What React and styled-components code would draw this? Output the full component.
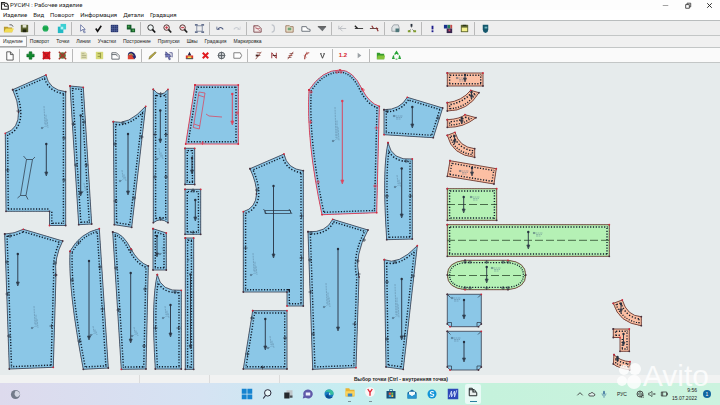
import React, { useState } from 'react';
import styled, { createGlobalStyle } from 'styled-components';

const BLUE = '#8bc7e7';
const ORANGE = '#fcbfa3';
const GREEN = '#b5f1b5';
const INK = '#26303f';
const RED = '#e23a52';

const menus = ['Изделие', 'Вид', 'Поворот', 'Информация', 'Детали', 'Градация'];

const tabs = ['Изделие', 'Поворот', 'Точки', 'Линии', 'Участки', 'Построение', 'Припуски', 'Швы', 'Градация', 'Маркировка'];

const icons = {
  open: <><path d="M1 4h4l1 1h4v5H1z" fill="#b99a2e" /><path d="M3 6h9l-2 4H1z" fill="#f1dc55" /><path d="M7 2q3-1 4 2" stroke="#555" fill="none" /></>,
  save: <><path d="M2 2h8v8H2z" fill="#5c6330" /><path d="M4 2h4v3H4z" fill="#e4e6d2" /><path d="M4 7h4v3H4z" fill="#22260f" /></>,
  circle: <><circle cx="6" cy="6" r="3.3" fill="#17a74a" /><path d="M4 3h4M4 9h4" stroke="#6cc9a0" /></>,
  copies: <><path d="M5 1h6v6H5z" fill="#3bd0d3" /><path d="M2 4h6v7H2z" fill="#22b9c4" /><path d="M5 4h3v3H5z" fill="#aef4f2" /></>,
  cursor: <path d="M4 2v7l2-2 2 4 1-1-2-3h2z" fill="#fff" stroke="#4c5a92" strokeWidth=".8" />,
  check: <path d="M3 6l2 3 4-6" fill="none" stroke="#111" strokeWidth="1.7" />,
  grid: <><path d="M2 2h8v8H2z" fill="#25346e" /><path d="M4 2v8M6 2v8M8 2v8M2 4h8M2 6h8M2 8h8" stroke="#6f80b8" strokeWidth=".4" /></>,
  blocks: <><path d="M2 2h5v5H2zM6 6h5v4H6z" fill="#145c2b" /><path d="M3 3h2v2H3zM8 7h2v2H8z" fill="#49a34c" /></>,
  zoom: <><circle cx="5" cy="5" r="3" fill="#eef4f4" stroke="#222" /><path d="M7 7l3 3.4" stroke="#111" strokeWidth="1.8" /></>,
  zoomIn: <><circle cx="5" cy="5" r="3" fill="#f4dcdc" stroke="#462a2a" /><path d="M3.5 5h3M5 3.5v3" stroke="#c22c3c" strokeWidth=".9" /><path d="M7 7l3 3.4" stroke="#222" strokeWidth="1.8" /></>,
  zoomOut: <><circle cx="5" cy="5" r="3" fill="#f4dcdc" stroke="#462a2a" /><path d="M3.5 5h3" stroke="#c22c3c" /><path d="M7 7l3 3.4" stroke="#222" strokeWidth="1.8" /></>,
  frame: <><path d="M3 3h6v6H3z" fill="none" stroke="#66728f" strokeWidth=".8" /><path d="M1 1h3v2H1zM8 1h3v2H8zM1 9h3v2H1zM8 9h3v2H8z" fill="#66728f" /></>,
  undo: <><path d="M3 7q3-4 6 0" fill="none" stroke="#4b587e" strokeWidth="1.1" /><path d="M2 4v3h3" fill="none" stroke="#4b587e" strokeWidth=".8" /></>,
  redo: <><path d="M3 7q3-4 6 0" fill="none" stroke="#c9ccd2" strokeWidth="1.1" /><path d="M10 4v3H7" fill="none" stroke="#c9ccd2" strokeWidth=".8" /></>,
  partRed: <><path d="M2 3h5l3 3v4H2z" fill="#f3e7e5" stroke="#7d4b50" /><path d="M2 3l7 6M4 6h5" stroke="#b15560" strokeWidth=".7" /></>,
  bracket: <path d="M4 2q3 0 3 4t-3 4" fill="none" stroke="#c0c4ca" strokeWidth="1.4" />,
  partGreen: <><path d="M2 3h4l1 1h3v6H2z" fill="#efe2cd" stroke="#9b7a60" /><path d="M4 5h4v3H4z" fill="#72a678" /></>,
  part: <path d="M2 4h5q0 3 4 3v2H2z" fill="#fff" stroke="#555c66" strokeWidth=".9" />,
  wedge: <><path d="M2 4h9L7 9z" fill="#6c7073" /><path d="M2 4h9" stroke="#444" /></>,
  lineGrey: <path d="M2 3v4M2 6h8M6 3L3 6l3 3" fill="none" stroke="#b4b7bc" strokeWidth=".9" />,
  lineOne: <><path d="M2 6h9" stroke="#333" /><path d="M2 3l3 3" stroke="#222" strokeWidth="1.4" /></>,
  lineTwo: <><path d="M1 6h9" stroke="#5b3b38" /><path d="M3 3l2 3M8 5l2 4" stroke="#8f2e2e" strokeWidth="1.3" /></>,
  printer: <><path d="M2 5l2-3h5l1 3v4H2z" fill="#dfe4e6" stroke="#899097" strokeWidth=".8" /><path d="M6 6h4v4H6z" fill="#4f787b" /></>,
  nodes: <><path d="M6 2v3M3 9l2-2M9 9L7 7" stroke="#777" /><path d="M5 1h2v3H5z" fill="#27303c" /><path d="M2 8h3v2H2zM8 8h3v2H8z" fill="#7f9c2c" /></>,
  mark: <><path d="M5 3h2v4H5z" fill="#1c1b8a" /><path d="M5 8h2v2H5z" fill="#1c1b8a" /></>,
  palette: <><path d="M1 2h4v4H1z" fill="#18308c" /><path d="M5 2h3v4H5z" fill="#237d55" /><path d="M8 2h2v4H8z" fill="#c54848" /><path d="M4 6h6v5H4z" fill="#39274e" /><path d="M6 7h2v2H6z" fill="#c54869" /></>,
  calc: <><path d="M2 2h8v8H2z" fill="#5d6531" /><path d="M3 5h6v4H3z" fill="#f4f18e" /><path d="M4 2h4v1H4z" fill="#1d2515" /></>,
  shield: <><path d="M3 2h6v5q0 3-3 4-3-1-3-4z" fill="#14576c" /><path d="M5 4h3v2H5z" fill="#72b5c0" /></>,
  page: <path d="M3 2h4l3 3v6H3zM7 2v3h3" fill="#fff" stroke="#444" strokeWidth=".9" />,
  plus: <path d="M4.5 2h3v2.500H10v3H7.500V10h-3V7.500H2v-3h2.500z" fill="#0f8a2d" stroke="#0a5c1d" strokeWidth=".6" />,
  delRed: <><path d="M2 2h8v8H2z" fill="#e21b22" /><path d="M2 2l8 8M10 2l-8 8" stroke="#b51820" strokeWidth="1.6" /></>,
  delBrown: <><circle cx="6" cy="6" r="3.6" fill="#63753b" /><path d="M2 2l8 8M10 2l-8 8" stroke="#a6352a" strokeWidth="1.5" /></>,
  noteOld: <><path d="M3 2h5l2 2v6H3z" fill="#ddddb0" /><path d="M4 4h3M4 6h5M4 8h5" stroke="#a4a578" strokeWidth=".8" /></>,
  noteNew: <><path d="M2 2h8v8H2z" fill="#d6d977" /><path d="M7 3v6M4 4h3M4 7h3" stroke="#8e9442" /></>,
  detail: <path d="M2 3h5l3 3v4H2zM2 5h5l1 2" fill="#fff" stroke="#50565c" strokeWidth=".9" />,
  protractor: <><path d="M2 6q0-4 4-4 4 1 5 6l-2 2z" fill="#24266f" /><path d="M2 6l4-1 3 5H2z" fill="#dc4434" /><path d="M3 5q3-2 5 1" fill="none" stroke="#f6d94e" /></>,
  pencil: <path d="M2 10l1-3 6-5 1 1-6 6z" fill="#b7a840" stroke="#6f682f" strokeWidth=".6" />,
  pick: <><path d="M3 2v6l2-1 2 4 1-1-1-3h2z" fill="#7e83c9" stroke="#3d4075" strokeWidth=".7" /><path d="M7 3h3v5M2 5h6" stroke="#55598f" fill="none" /></>,
  dart: <><path d="M6 2l2 4H4z" fill="#231f43" /><path d="M2 6h8v3H2z" fill="#d9332b" /><path d="M4 7h4v2H4z" fill="#f4e14a" /><path d="M2 9h8v1H2z" fill="#333" /></>,
  cross: <path d="M3 3l6 6M9 3l-6 6" stroke="#e01a1f" strokeWidth="2.200" />,
  target: <><circle cx="6" cy="6" r="3.6" fill="#c9cccf" stroke="#5a6066" /><path d="M6 2v8M2 6h8" stroke="#5a6066" /></>,
  label: <path d="M2 3h7l1.500 3L9 9H2z" fill="#fff" stroke="#777" />,
  segA: <><path d="M3 10l6-8M4 3h4M4 6h4" stroke="#96534a" /><path d="M3 5h3v2H3z" fill="#4a2220" /></>,
  segB: <><path d="M3 9V3l5 6V3" fill="none" stroke="#9a3135" /><path d="M4 6h4" stroke="#4a2220" /></>,
  segC: <><path d="M3 10l6-8M4 6h4" stroke="#a5564d" /><path d="M5 4h4M3 8h4" stroke="#6a2c2c" strokeWidth=".8" /></>,
  segD: <><path d="M4 10q0-7 5-7" fill="none" stroke="#a33b38" strokeWidth="1.300" /><path d="M3 6l3 2M6 2l1 3" stroke="#b86058" strokeWidth=".8" /></>,
  vee: <path d="M4 4l2 5 2-5M3.500 4h1.500M7 4h1.500" fill="none" stroke="#2b2b2b" strokeWidth=".9" />,
  play: <path d="M4 3l4 3-4 3z" fill="#9aa0a4" />,
  folderGreen: <><path d="M2 3h3l1 1h4v6H2z" fill="#359b2d" /><path d="M3 6h8l-1 4H2z" fill="#84c43a" /></>,
  recycle: <><path d="M4 5l2-3 2 3M9 6l1 3H8M3 6L2 9h2" fill="none" stroke="#27a336" strokeWidth="1.500" /><path d="M5 10h2" stroke="#27a336" /></>,
};

const mainTools = [
  [['open', 'Открыть'], ['save', 'Сохранить']],
  [['circle', 'Размеры'], ['copies', 'Копии']],
  [['cursor', 'Выбор'], ['check', 'Проверка'], ['grid', 'Сетка'], ['blocks', 'Раскладка']],
  [['zoom', 'Лупа'], ['zoomIn', 'Увеличить'], ['zoomOut', 'Уменьшить'], ['frame', 'Показать все']],
  [['undo', 'Отменить'], ['redo', 'Повторить']],
  [['partRed', 'Деталь'], ['bracket', 'Контур'], ['partGreen', 'Папка деталей'], ['part', 'Лекало'], ['wedge', 'Фильтр']],
  [['lineGrey', 'Линия'], ['lineOne', 'Начало линии'], ['lineTwo', 'Конец линии']],
  [['printer', 'Печать'], ['nodes', 'Структура']],
  [['mark', 'Справка'], ['palette', 'Цвета'], ['calc', 'Калькулятор']],
  [['shield', 'Защита']],
];

const productTools = [
  [['page', 'Новое изделие']],
  [['plus', 'Добавить деталь'], ['delRed', 'Удалить деталь'], ['delBrown', 'Удалить все']],
  [['noteOld', 'Описание'], ['noteNew', 'Спецификация'], ['detail', 'Свойства'], ['protractor', 'Поворот детали']],
  [['pencil', 'Карандаш'], ['pick', 'Выбор участка']],
  [['dart', 'Вытачка'], ['cross', 'Удалить'], ['target', 'Центр'], ['label', 'Надпись']],
  [['segA', 'Отрезок'], ['segB', 'Ломаная'], ['segC', 'Кривая'], ['segD', 'Дуга'], ['vee', 'Надсечка']],
  [['scale', 'Масштаб'], ['play', 'Пуск']],
  [['folderGreen', 'База'], ['recycle', 'Обновить']],
];

// d: outline, a: grain line [x, y1, y2], n: notches, t: handwritten label [x, y, height], m: extra marks
const pieces = [
  { d: 'M12.7 89.7 L46 75 Q49 90 65.7 91.7 L65.7 225.5 L49.5 225.5 L49.5 211.3 L6 211.3 L5.3 133.3 Q19 129 18.5 112 Q18 101 12.7 89.7', a: [46.3, 144, 176], n: [[18.500, 111], [64, 138], [64, 180], [7.500, 170]], t: [42, 128, 22], m: 'M23.500 156L26.500 159.500H32.500L35 157M26.500 159.500L20.500 195.500H26L32.500 159.500M20.500 195.500L17.500 198M26 195.500L28 199.500' },
  { d: 'M70 86 L83.300 87.300 L91.700 224 L78.700 224.700 L70 86', a: [80.7, 115.500, 196], n: [[73.500, 124], [84, 122], [76, 165], [86.500, 165]], t: [82, 192, 9] },
  { d: 'M113.300 121.700 Q128 126 145.700 106.300 L131.700 227.300 L114.300 224.700 L113.300 121.700', a: [128, 134, 195], n: [[123, 123], [115, 144], [115.500, 201], [141.500, 137], [134, 198]], t: [120, 181, 11] },
  { d: 'M153.300 89.300 Q160.700 99 168 89.300 L168 222.700 Q160.700 217 153.300 222.700 L153.300 89.300', a: [160.300, 110.500, 143], n: [[155, 134.500], [166, 134.500], [155, 177], [166, 177], [160.700, 94], [160.700, 219]], t: [157, 159, 11] },
  { d: 'M4.700 234 Q14 234 23.300 229.300 L62.700 241 Q54 258 56 275 L53.300 367.300 L9.300 369 L4.700 234', a: [17.800, 254, 286], n: [[10, 236], [7, 262], [7.500, 294], [9, 336], [55, 263], [55.500, 275], [51.500, 326]], t: [32, 328, 22] },
  { d: 'M70 251.300 Q80 233 99.300 228.700 L108.300 368 L83.300 369.300 Q68 290 70 251.300', a: [89, 261, 340], n: [[78.500, 243], [72, 280], [79.500, 341], [100, 267], [102.500, 309]], t: [91, 335, 9] },
  { d: 'M112.700 232 Q123 233 131 249 Q138 262 148.300 266 L146 369 L121.300 369.300 L112.700 232', a: [130.700, 273, 343], n: [[131, 250], [116, 268], [118.500, 310], [145, 289], [144, 346]], t: [132, 336, 9] },
  { d: 'M153 228.700 L166.300 233 L166.300 270 L153 270 L153 228.700', a: [157, 236, 257], n: [], t: [160, 254, 7] },
  { d: 'M157.300 274.700 Q161 292 181.300 290.300 L181.300 369 L155.300 369 Q151 300 157.300 274.700', a: [170.500, 305, 337], n: [[175, 292], [155.500, 328], [178.500, 328]], t: [163, 318, 12] },
  { d: 'M195 85 L238.300 85 L238.300 144 L185.700 144 L195 85', c: RED, a: [232.300, 94, 125], n: [[237, 113], [202.500, 143]], m: 'M199 92L205 93 199.300 129 193.300 127.500ZM198 95l6 2M194 124l6 2M206 114l3 2 13 1' },
  { d: 'M185 148.300 L194.700 148.300 L194.700 184.500 L185 184.500 L185 148.300', a: [192, 158, 174], n: [] },
  { d: 'M185 189.300 L200.700 189.300 L200.700 234.300 L185 234.300 L185 189.300', a: [195.300, 200, 221], n: [[193, 190.500], [193, 232.500]] },
  { d: 'M185.300 238 L193.700 238 L193.700 369.300 L185.300 369.300 L185.300 238', a: [190.500, 274.500, 349], n: [], t: [188, 260, 6] },
  { d: 'M250 168.700 L284 154 Q287 169 303.300 170.700 L303.300 306 L287 306 L287 292 L243.300 292 L243.300 211.700 Q256 208 256.500 194 Q257 184 250 168.700', a: [273.500, 186, 258], n: [[257, 190], [301.500, 216], [301.500, 258], [245.500, 248]], t: [251, 275, 22], m: 'M265 210.500H290.500V213.500H265ZM263.500 209l3 5M289 209l3 5' },
  { d: 'M252.700 310.700 L287 310.700 L287 369 L243.300 369 L252.700 310.700', a: [265.300, 319, 350], n: [[252, 318], [247.500, 354], [285, 338], [262.500, 367.500]], t: [268, 348, 12] },
  { d: 'M309 90 Q322 70 340 70 Q353 70 362 89 Q369 103 379.300 106.300 L376.700 212.700 L322 214.700 Q306 140 309 90', c: RED, a: [342.300, 101, 184], n: [[311, 92], [310.500, 122], [318, 182], [341, 72], [337, 72], [363, 90], [376.500, 128], [375, 186]], t: [333, 141, 34] },
  { d: 'M384 109.700 Q400 110 407.300 97.300 L442.700 108 L433.300 137.700 L384 134.700 L384 109.700', a: [412.300, 107, 128], n: [[387, 111], [438, 118]], t: [394, 116, 5] },
  { d: 'M388 142.700 Q392 161 412.300 159 L412.300 239 L386.700 239.700 Q382 170 388 142.700', a: [401.700, 168.500, 218], n: [[406, 161], [387, 196], [410.500, 196]], t: [395, 187, 12] },
  { d: 'M308 231.700 Q326 233 332.700 219.300 L368 230 Q354 255 359 277 L356 367.700 L312.700 369.300 L308 231.700', a: [338, 249, 331], n: [[311, 233], [310, 260], [310.500, 292], [313, 334], [364, 240], [357.500, 261], [358.500, 274], [354.500, 324]], t: [324, 307, 24] },
  { d: 'M384.300 259.700 Q398 266 417.300 245.700 L403.300 369.300 L386 367 L384.300 259.700', a: [401.700, 279, 340], n: [[395, 262], [387, 282], [387, 339], [413, 276], [404.500, 336]], t: [393, 318, 34] },
  { d: 'M447.300 73 L483 73 L483 86 L447.300 86 L447.300 73', f: ORANGE, a: [465, 75, 82], n: [], t: [457, 78, 3] },
  { d: 'M447.300 102.700 Q462 101 470.700 90.300 L479 92.700 Q468 111 447.300 111 L447.300 102.700', f: ORANGE, a: [471.500, 92, 99], n: [] },
  { d: 'M447.300 119.700 Q460 119 465 114.700 L476 117.700 Q463 128 447.300 127.300 L447.300 119.700', f: ORANGE, a: [461.700, 118, 124], n: [] },
  { d: 'M447.300 135.300 L455 132.300 Q459 147 474.700 148.700 L474.700 157.300 Q452 155 447.300 135.300', f: ORANGE, a: [454.500, 136, 144], n: [] },
  { d: 'M450 160.700 L496.300 168.700 L494 184 L447.300 176.300 L450 160.700', f: ORANGE, a: [472, 168, 176], n: [], t: [460, 171, 3] },
  { d: 'M447.300 188.700 L496.700 188.700 L496.700 220.300 L447.300 220.300 L447.300 188.700', f: GREEN, a: [463.700, 197, 213], n: [], fold: [447, 497, 204.500], t: [471, 197, 5] },
  { d: 'M447.300 224.700 L609.300 224.700 L609.300 256.300 L447.300 256.300 L447.300 224.700', f: GREEN, a: [528.300, 232, 249], n: [], fold: [447, 609, 240.300], t: [534, 233, 5] },
  { d: 'M465 260.300 L508 260.300 Q525.700 262 525.700 275 Q525.700 288 508 289.700 L465 289.700 Q447.300 288 447.300 275 Q447.300 262 465 260.300', f: GREEN, a: [486.700, 267, 283], n: [[465, 262], [470, 262], [486.700, 262], [503, 262], [508, 262], [465, 288], [470, 288], [486.700, 288], [503, 288], [508, 288]], fold: [447, 526, 275.500], t: [492, 268, 5] },
  { d: 'M447.300 294.300 L481.300 294.300 L481.300 324 L478.500 326.700 L450 326.700 L447.300 324 L447.300 294.300', plain: true, a: [464, 300, 319], n: [], t: [452, 298, 5], m: 'M447.500 322.500h4v4M481 322.500h-4v4M447.500 294.500l3 3M481 294.500l-3 3' },
  { d: 'M447.300 331.300 L481.300 331.300 L481.300 367 L478.500 370 L450 370 L447.300 367 L447.300 331.300', plain: true, a: [464, 342, 362], n: [], t: [452, 338, 5], m: 'M447.500 366h4v4M481 366h-4v4M447.500 331.500l3 3M481 331.500l-3 3' },
  { d: 'M613.300 303.300 L622.300 300 Q627 316 641.300 316.700 L641.300 325.700 Q619 323 613.300 303.300', f: ORANGE, a: [621, 304, 313], n: [] },
  { d: 'M613.300 329 L629.300 329 L629.300 351.300 L620 351.300 L620 337.500 L613.300 337.500 L613.300 329', f: ORANGE, a: [623.500, 334, 346], n: [] },
  { d: 'M614 354.700 Q620 361 630 361.700 L630 370 Q618 368 613.300 364 L614 354.700', f: ORANGE, a: [617.500, 357, 362], n: [] },
];

const cornersOf = (d) => d.match(/[MLQ][^MLQ]+/g).map((part) => part.slice(1).trim().split(/\s+/).slice(-2).map(Number));

const Piece = ({ piece, id }) => {
  const color = piece.c || INK;
  const fill = piece.f || BLUE;
  const outline = piece.c || (piece.f ? '#704038' : '#454e60');
  const [ax, top, bottom] = piece.a;
  return (
    <g>
      <clipPath id={id}><path d={piece.d} /></clipPath>
      <path d={piece.d} fill={fill} />
      {!piece.plain && (
        <g clipPath={`url(#${id})`} fill="none">
          <path d={piece.d} stroke="#101c2c" strokeWidth="6" strokeDasharray="1.200 1.600" />
          <path d={piece.d} stroke={fill} strokeWidth="3.200" />
        </g>
      )}
      <path d={piece.d} fill="none" stroke={outline} strokeWidth=".9" />
      {piece.fold && <path d={`M${piece.fold[0]} ${piece.fold[2]}H${piece.fold[1]}`} stroke="#2d4a2d" strokeWidth=".8" strokeDasharray="8 3" />}
      {piece.t && <Scribble x={piece.t[0]} y={piece.t[1]} size={piece.t[2]} />}
      {piece.m && <path d={piece.m} fill="none" stroke={color} strokeWidth=".7" />}
      {piece.n.map(([x, y], i) => <path key={i} d={`M${x - 2} ${y}h4M${x} ${y - 2}v4`} stroke={color} strokeWidth=".7" />)}
      <path d={`M${ax} ${top}V${bottom - 2}`} stroke={color} strokeWidth=".9" />
      <path d={`M${ax - 1.500} ${bottom - 4}h3l-1.500 4z`} fill={color} fillOpacity=".7" stroke={color} strokeWidth=".6" />
      <circle cx={ax} cy={top} r="1.200" fill={color} />
      {cornersOf(piece.d).map(([x, y], i) => <circle key={i} cx={x} cy={y} r=".9" fill={i % 3 === 1 || piece.c ? '#d0273b' : '#48303e'} />)}
    </g>
  );
};

const Scribble = ({ x, y, size }) => (
  <g fill="none" stroke="#4a6b85" strokeWidth=".5" opacity=".75">
    <circle cx={x} cy={y} r=".8" fill={INK} />
    {size > 5
      ? <path d={`M${x + 1} ${y}L${x + 3} ${y - 2}M${x + 2} ${y - size}L${x + 3} ${y - 3}M${x + 4} ${y - size * 0.6}L${x + 4} ${y - 1}M${x + 5} ${y - size * 0.4}L${x + 6} ${y}`} strokeDasharray="2 .7" />
      : <path d={`M${x + 1} ${y}h8M${x + 2} ${y + 1.500}h6M${x + 2} ${y + 3}h5`} strokeDasharray="2 .5" />}
  </g>
);

const Tools = ({ groups }) => groups.map((group, i) => (
  <Group key={i}>
    {group.map(([name, label]) => (
      <Tool key={name} type="button" aria-label={label}>
        {name === 'scale' ? <Scale>1.2</Scale> : <Icon viewBox="0 0 12 12">{icons[name]}</Icon>}
      </Tool>
    ))}
  </Group>
));

const taskIcons = [
  ['Пуск', <><path d="M1 1h6.500v6.500H1zM8.500 1H15v6.500H8.500zM1 8.500h6.500V15H1zM8.500 8.500H15V15H8.500z" fill="#1684d0" /></>],
  ['Поиск', <><circle cx="9" cy="6.500" r="4.300" fill="#e8f7fa" stroke="#223" strokeWidth="1.300" /><path d="M6 10l-3 4" stroke="#223" strokeWidth="1.500" /></>],
  ['Представление задач', <><path d="M6 3h8v8H6z" fill="#bfc5c9" /><path d="M3 6h7v8H3z" fill="#25292d" /><path d="M10 10h4v3h-4z" fill="#4a4f54" /></>],
  ['Чат', <><path d="M8 2a6 6 0 1 1-3 11l-4 1 1-4a6 6 0 0 1 6-8" fill="#5f59a9" /><path d="M5 6h6v4H5z" fill="#eeeefa" /></>],
  ['Edge', <><circle cx="8" cy="8" r="6" fill="#187bc3" /><path d="M2 7q2-6 8-5 5 2 4 7H9q0-4-3-4-3 0-4 2" fill="#36bda0" /><path d="M7 8q0 4 6 4-5 4-9 0-1-3 3-4" fill="#0e4c91" /><path d="M8 6.500q2 0 2 2.500H8" fill="#e6f7fa" /></>],
  ['Проводник', <><path d="M2 3h5l1 2h6v9H2z" fill="#e9b333" /><path d="M2 7h12v6H2z" fill="#fbd45c" /><path d="M5 10h6v4H5z" fill="#3b86c6" /></>, true],
  ['Яндекс', <><circle cx="8" cy="8" r="6.500" fill="#fbf6f6" /><path d="M5 4l3 4.500V13M11 4L8 8.500" fill="none" stroke="#e32635" strokeWidth="1.800" /></>, true],
  ['Магазин', <><path d="M2 4h12v10H2z" fill="#195078" /><path d="M6 4V2h4v2" fill="none" stroke="#256a93" /><path d="M5 6h3v3H5z" fill="#e85b3b" /><path d="M8.500 6H11v3H8.500z" fill="#7cc04a" /><path d="M5 9.500h3V12H5z" fill="#39a7e0" /><path d="M8.500 9.500H11V12H8.500z" fill="#f4c53b" /></>],
  ['Почта', <><path d="M2 6l6-4 6 4v8H2z" fill="#16679e" /><path d="M4 5h8v4l-4 2-4-2z" fill="#f2fafd" /><path d="M2 7l6 4 6-4v7H2z" fill="#2795cf" /></>],
  ['Skype', <><circle cx="8" cy="8" r="6" fill="#1295d8" /><path d="M10.500 5.500Q8 4 6 5.500q-1 2 2 2.500 3.500.5 2 2.500-2 1.500-4.500 0" fill="none" stroke="#fff" strokeWidth="1.400" /></>],
  ['Maxima', <><path d="M1 1h14v14H1z" fill="#2f49b9" /><path d="M3 12L6 4v8l4-8v8l3-9" fill="none" stroke="#d6e2fb" strokeWidth="1.100" /></>],
  ['Русич', <><path d="M3 3h4l1 2h2l3 4v4H3z" fill="#e9eeee" stroke="#1f2426" strokeWidth="1.300" /><path d="M3 5h5v3h4" fill="none" stroke="#1f2426" strokeWidth="1.500" /></>, true, true],
];

const App = () => {
  const [tab, setTab] = useState('Изделие');

  return (
    <>
      <GlobalStyle />
      <Window>
        <TitleBar>
          <Icon viewBox="0 0 12 12"><path d="M2 2h4l1 1h2l2 3v5H2z" fill="#fff" stroke="#222" strokeWidth="1.500" /><path d="M2 4h4v3h4" fill="none" stroke="#222" strokeWidth="1.300" /></Icon>
          <Title>РУСИЧ : Рабочее изделие</Title>
          <Controls>
            <Control type="button" aria-label="Свернуть"><Icon viewBox="0 0 12 12"><path d="M3 6h6" stroke="#999" /></Icon></Control>
            <Control type="button" aria-label="Восстановить"><Icon viewBox="0 0 12 12"><path d="M4 5h4v4H4zM5.500 5V3.500h4v4H8" fill="none" stroke="#333" strokeWidth=".9" /></Icon></Control>
            <Control type="button" aria-label="Закрыть"><Icon viewBox="0 0 12 12"><path d="M3.500 3.500l5 5M8.500 3.500l-5 5" stroke="#222" /></Icon></Control>
          </Controls>
        </TitleBar>
        <MenuBar>
          {menus.map((name) => <MenuItem key={name} type="button">{name}</MenuItem>)}
        </MenuBar>
        <Toolbar><Tools groups={mainTools} /></Toolbar>
        <TabBar role="tablist">
          {tabs.map((name) => (
            <Tab key={name} type="button" role="tab" aria-selected={tab === name} $active={tab === name} onClick={() => setTab(name)}>{name}</Tab>
          ))}
        </TabBar>
        <Toolbar $light><Tools groups={productTools} /></Toolbar>
        <Canvas>
          <Drawing viewBox="0 63 720 312" preserveAspectRatio="xMinYMin meet" role="img" aria-label="Детали изделия">
            {pieces.map((piece, i) => <Piece key={i} piece={piece} id={`piece${i}`} />)}
          </Drawing>
        </Canvas>
        <StatusBar>
          <StatusCell />
          <StatusCell $narrow />
          <StatusCell $narrow />
          <StatusText>Выбор точки (Ctrl - внутренняя точка)</StatusText>
        </StatusBar>
        <TaskBar>
          <Widget type="button" aria-label="Погода">
            <Icon viewBox="0 0 12 12"><circle cx="6" cy="6" r="5" fill="#737b8a" /><path d="M11 6q-1-4-5-4-2 3 0 6 3 2 5-2" fill="#d3d6e2" /></Icon>
          </Widget>
          <Apps>
            {taskIcons.map(([label, art, running, active]) => (
              <AppButton key={label} type="button" aria-label={label} $running={running} $active={active}>
                <AppIcon viewBox="0 0 16 16">{art}</AppIcon>
              </AppButton>
            ))}
          </Apps>
          <Tray>
            <TrayIcon viewBox="0 0 12 12"><path d="M2 8l4-4 4 4" fill="none" stroke="#333" strokeWidth="1.300" /></TrayIcon>
            <TrayIcon viewBox="0 0 12 12"><path d="M3 9h6q2-1 1-3-1-1-2-1-2-3-4 0-3 0-3 2 0 2 2 2" fill="#dff1ec" stroke="#333" strokeWidth="1.200" /></TrayIcon>
            <TrayIcon viewBox="0 0 12 12"><rect x="4.500" y="1" width="3" height="6" rx="1.500" fill="#5287a8" /><path d="M3 5q0 4 3 4t3-4M6 9v3" fill="none" stroke="#5287a8" /></TrayIcon>
            <Language type="button">РУС</Language>
            <TrayIcon viewBox="0 0 12 12"><circle cx="6" cy="6" r="4.500" fill="none" stroke="#333" strokeWidth="1.200" /><path d="M1.500 6h9M6 1.500q-4 4.500 0 9 4-4.500 0-9M8 8h4v4H8z" fill="none" stroke="#333" strokeWidth=".8" /></TrayIcon>
            <TrayIcon viewBox="0 0 12 12"><path d="M1 4.500h2l3-2.500v8L3 7.500H1zM8 4.500l3 3M11 4.500l-3 3" fill="none" stroke="#333" /></TrayIcon>
            <TrayIcon viewBox="0 0 12 12"><path d="M2 3h8v6H2zM10 5h1.500v2H10M4 3v6" fill="none" stroke="#333" strokeWidth="1.200" /></TrayIcon>
            <Clock><time>9:56</time><time>15.07.2022</time></Clock>
            <Badge>1</Badge>
          </Tray>
        </TaskBar>
        <Watermark>
          <Dots viewBox="0 0 28 28">
            <circle cx="9" cy="8" r="5" />
            <circle cx="20" cy="7" r="6" />
            <circle cx="7" cy="19" r="5" />
            <circle cx="19" cy="20" r="7" />
          </Dots>
          Avito
        </Watermark>
      </Window>
    </>
  );
};

const GlobalStyle = createGlobalStyle`
  body {
    margin: 0;
    font-family: "Liberation Sans", Arial, sans-serif;
    color: #222;
  }
  button {
    font: inherit;
    color: inherit;
    border: 0;
    padding: 0;
    background: none;
  }
`

const Window = styled.div`
  position: relative;
  display: flex;
  flex-direction: column;
  min-height: 100vh;
  overflow: hidden;
  background: #f0f0f0;
`

const Icon = styled.svg`
  display: block;
  width: 11px;
  height: 11px;
`

const TitleBar = styled.header`
  display: flex;
  align-items: center;
  height: 10px;
  background: #fdfdfd;
  font-family: Roboto, "Liberation Sans", sans-serif;
  font-size: 6px;
  line-height: 10px;

  > svg {
    width: 9px;
    height: 9px;
  }
`

const Title = styled.span`
  flex: 1;
  padding-left: 1px;
  white-space: nowrap;
`

const Controls = styled.div`
  display: flex;
`

const Control = styled.button`
  display: grid;
  place-items: center;
  width: 22px;
  height: 10px;
`

const MenuBar = styled.nav`
  display: flex;
  gap: 6px;
  padding: 0 3px;
  background: #fff;
  border-bottom: 1px solid #b9bcbd;
  font-family: Roboto, "Liberation Sans", sans-serif;
`

const MenuItem = styled.button`
  font-size: 6px;
  line-height: 10px;
`

const Toolbar = styled.div`
  display: flex;
  align-items: center;
  height: 14px;
  padding-left: ${props => props.$light ? '1px' : 0};
  background: ${props => props.$light ? '#fafafa' : '#eeeeee'};
  border-bottom: 1px solid #c3c6c6;
`

const Group = styled.div`
  display: flex;

  & + & {
    margin-left: 2px;
    padding-left: 2px;
    border-left: 1px solid #b9b9b9;
  }
`

const Tool = styled.button`
  display: grid;
  place-items: center;
  width: 16px;
  height: 13px;
`

const Scale = styled.b`
  color: #d5222c;
  font-size: 6px;
  line-height: 8px;
`

const TabBar = styled.div`
  display: flex;
  align-items: center;
  gap: 1px;
  height: 11px;
  border-bottom: 1px solid #c3c6c6;
`

const Tab = styled.button`
  height: 9px;
  padding: 0 3px;
  font-size: 5px;
  line-height: 9px;
  background: ${props => props.$active ? '#fafafa' : 'transparent'};
  box-shadow: ${props => props.$active ? '0 0 0 1px #aaa' : 'none'};
`

const Canvas = styled.main`
  flex: 1;
  background: #e6ebec;
`

const Drawing = styled.svg`
  display: block;
  width: 100%;
  height: auto;
`

const StatusBar = styled.footer`
  display: flex;
  height: 8px;
  background: #f1f2f2;
`

const StatusCell = styled.span`
  width: ${props => props.$narrow ? '70px' : '140px'};
  box-sizing: border-box;
  border-right: 1px solid #dcdcdc;
`

const StatusText = styled.span`
  padding-left: 74px;
  font-size: 5px;
  font-weight: bold;
  line-height: 8px;
  white-space: nowrap;
`

const TaskBar = styled.div`
  display: grid;
  grid-template-columns: 1fr auto 1fr;
  align-items: center;
  height: 22px;
  background: linear-gradient(90deg, #dddaed 0%, #d5e3f3 28%, #c6edf1 48%, #c5f2dc 68%, #ccf3df 100%);
`

const Widget = styled.button`
  justify-self: start;
  margin-left: 10px;
`

const Apps = styled.div`
  display: flex;
  justify-content: space-between;
  width: 243px;
`

const AppButton = styled.button`
  display: grid;
  place-items: center;
  width: 16px;
  height: 20px;
  border-radius: 2px;
  background: ${props => props.$active ? '#e9faf6' : 'transparent'};

  &::after {
    content: "";
    display: ${props => props.$running ? 'block' : 'none'};
    width: ${props => props.$active ? '7px' : '3px'};
    height: 1px;
    background: ${props => props.$active ? '#2b7fa0' : '#7d8f96'};
  }
`

const AppIcon = styled.svg`
  width: 12px;
  height: 12px;
`

const Tray = styled.div`
  display: flex;
  align-items: center;
  justify-content: flex-end;
  gap: 4px;
  padding-right: 9px;
`

const TrayIcon = styled.svg`
  width: 8px;
  height: 8px;
`

const Language = styled.button`
  padding: 0 5px;
  font-size: 5px;
`

const Clock = styled.div`
  display: flex;
  flex-direction: column;
  align-items: flex-end;
  font-size: 5px;
  line-height: 8px;
`

const Badge = styled.span`
  width: 8px;
  margin-left: 2px;
  border-radius: 50%;
  background: #14669f;
  color: #fff;
  font-size: 5px;
  line-height: 8px;
  text-align: center;
`

const Watermark = styled.div`
  position: absolute;
  right: 11px;
  bottom: 15px;
  display: flex;
  align-items: center;
  color: #fff;
  font-size: 30px;
  line-height: 22px;
  opacity: .8;
  pointer-events: none;
`

const Dots = styled.svg`
  width: 28px;
  height: 28px;
  fill: #fff;
`

export default App;
